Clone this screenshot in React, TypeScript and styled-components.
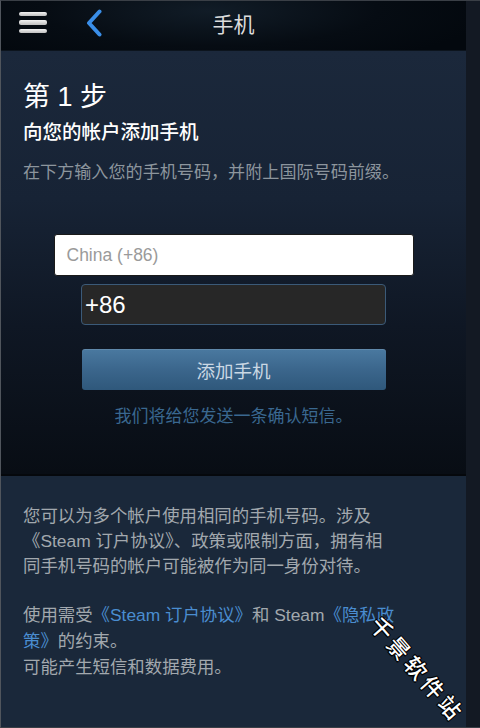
import React from "react";
import styled, { createGlobalStyle } from "styled-components";

const Global = createGlobalStyle`
  html, body { margin: 0; padding: 0; background: #121822; }
  * { box-sizing: border-box; }
  body { font-family: "Liberation Sans", "Noto Sans CJK SC", sans-serif; }
`;

const Frame = styled.div`
  position: relative;
  width: 480px;
  height: 728px;
  display: flex;
  overflow: hidden;
  border-left: 1px solid #50555c;
  border-top: 1px solid #3a3f46;
  border-bottom: 1px solid #3a3f46;
  background: #121822;
`;

const Main = styled.div`
  width: 465px;
  display: flex;
  flex-direction: column;
`;

const Strip = styled.div`
  flex: 1;
  background: #131923;
`;

const Header = styled.header`
  height: 50px;
  flex: none;
  display: flex;
  align-items: center;
  position: relative;
  background: radial-gradient(ellipse 60% 120% at 45% 20%, #111c27 0%, #060c13 60%, #03080e 100%);
  border-bottom: 1px solid #0c141d;
`;

const MenuButton = styled.div`
  width: 28px;
  margin-left: 18px;
  margin-top: -6px;
  display: flex;
  flex-direction: column;
  gap: 4px;
`;

const Bar = styled.span`
  display: block;
  height: 4.5px;
  border-radius: 2px;
  background: linear-gradient(#f2f2f2, #bfbfbf);
`;

const Back = styled.svg`
  margin-left: 38px;
  margin-top: -6px;
`;

const Title = styled.h1`
  position: absolute;
  left: 0;
  right: 0;
  top: 9px;
  margin: 0;
  text-align: center;
  font-family: "Noto Sans CJK SC", sans-serif;
  font-size: 21px;
  font-weight: 400;
  color: #dcdcdc;
  line-height: 26px;
`;

const Upper = styled.section`
  height: 425px;
  flex: none;
  padding: 29px 0 0 22px;
  display: flex;
  flex-direction: column;
  background: linear-gradient(180deg, #1b283b 0%, #172335 35%, #0f1724 65%, #080d14 100%);
  border-bottom: 2px solid #05080c;
`;

const StepTitle = styled.h2`
  margin: 0;
  font-family: "Liberation Sans", "Noto Sans CJK SC", sans-serif;
  font-size: 27px;
  font-weight: 400;
  line-height: 34px;
  color: #ffffff;
`;

const SubTitle = styled.h3`
  margin: 4px 0 0;
  font-family: "Noto Sans CJK SC", sans-serif;
  font-size: 19.5px;
  font-weight: 500;
  line-height: 26px;
  color: #ffffff;
`;

const Desc = styled.p`
  margin: 15px 0 0;
  font-family: "Noto Sans CJK SC", sans-serif;
  font-size: 17.1px;
  line-height: 24px;
  color: #8c959d;
`;

const Form = styled.div`
  margin-left: -22px;
  display: flex;
  flex-direction: column;
  align-items: center;
  margin-top: 51px;
`;

const CountryField = styled.div`
  width: 360px;
  height: 42px;
  background: #ffffff;
  border: 1px solid #1a1a1a;
  border-radius: 3px;
  display: flex;
  align-items: center;
  padding-left: 12px;
  font-size: 17.5px;
  color: #9a9a9a;
`;

const PhoneField = styled.div`
  width: 305px;
  height: 41px;
  margin-top: 8px;
  background: #272727;
  border: 1px solid #3b5a78;
  border-radius: 4px;
  display: flex;
  align-items: center;
  padding-left: 3px;
  font-size: 24px;
  color: #ffffff;
`;

const AddButton = styled.button`
  width: 304px;
  height: 41px;
  margin-top: 24px;
  border: none;
  border-radius: 3px;
  background: linear-gradient(180deg, #4a79a0 0%, #3b668c 50%, #2f587b 100%);
  box-shadow: inset 0 1px 0 rgba(255, 255, 255, 0.12);
  font-family: "Noto Sans CJK SC", sans-serif;
  font-size: 18.5px;
  color: #cad8e4;
  cursor: pointer;
`;

const Note = styled.p`
  margin: 13px 0 0;
  font-family: "Noto Sans CJK SC", sans-serif;
  font-size: 17px;
  line-height: 24px;
  color: #3a6890;
`;

const Lower = styled.section`
  flex: 1;
  background: #1a283a;
  padding: 28px 0 0 22px;
`;

const Para = styled.p<{ $gap?: number; $lh?: number }>`
  margin: ${(p) => p.$gap ?? 0}px 0 0;
  width: 373px;
  font-family: "Liberation Sans", "Noto Sans CJK SC", sans-serif;
  font-size: 17.4px;
  line-height: ${(p) => p.$lh ?? 25}px;
  color: #a2a8ae;
`;

const Link = styled.span`
  color: #4a8dd0;
`;

const Watermark = styled.div`
  position: absolute;
  left: 352px;
  top: 655px;
  width: 132px;
  font-family: "Noto Sans CJK SC", sans-serif;
  font-size: 22px;
  font-weight: 500;
  letter-spacing: 4px;
  color: #ffffff;
  line-height: 26px;
  transform: rotate(49deg);
  text-shadow: 1px 1px 0 #000, -1px -1px 0 #000, 1px -1px 0 #000, -1px 1px 0 #000;
  white-space: nowrap;
`;

export default function App() {
  return (
    <>
      <Global />
      <Frame>
        <Main>
          <Header>
            <MenuButton>
              <Bar />
              <Bar />
              <Bar />
            </MenuButton>
            <Back width="18" height="28" viewBox="0 0 18 28">
              <path d="M14.5 2.5 L4 14 L14.5 25.5" fill="none" stroke="#3a8ee8" strokeWidth="4" strokeLinecap="round" strokeLinejoin="round" />
            </Back>
            <Title>手机</Title>
          </Header>
          <Upper>
            <StepTitle>第 1 步</StepTitle>
            <SubTitle>向您的帐户添加手机</SubTitle>
            <Desc>在下方输入您的手机号码，并附上国际号码前缀。</Desc>
            <Form>
              <CountryField>China (+86)</CountryField>
              <PhoneField>+86</PhoneField>
              <AddButton>添加手机</AddButton>
              <Note>我们将给您发送一条确认短信。</Note>
            </Form>
          </Upper>
          <Lower>
            <Para>
              您可以为多个帐户使用相同的手机号码。涉及《Steam 订户协议》、政策或限制方面，拥有相同手机号码的帐户可能被作为同一身份对待。
            </Para>
            <Para $gap={23} $lh={26}>
              使用需受<Link>《Steam 订户协议》</Link>和 Steam<Link>《隐私政策》</Link>的约束。
              <br />
              可能产生短信和数据费用。
            </Para>
          </Lower>
        </Main>
        <Strip />
        <Watermark>千景软件站</Watermark>
      </Frame>
    </>
  );
}
